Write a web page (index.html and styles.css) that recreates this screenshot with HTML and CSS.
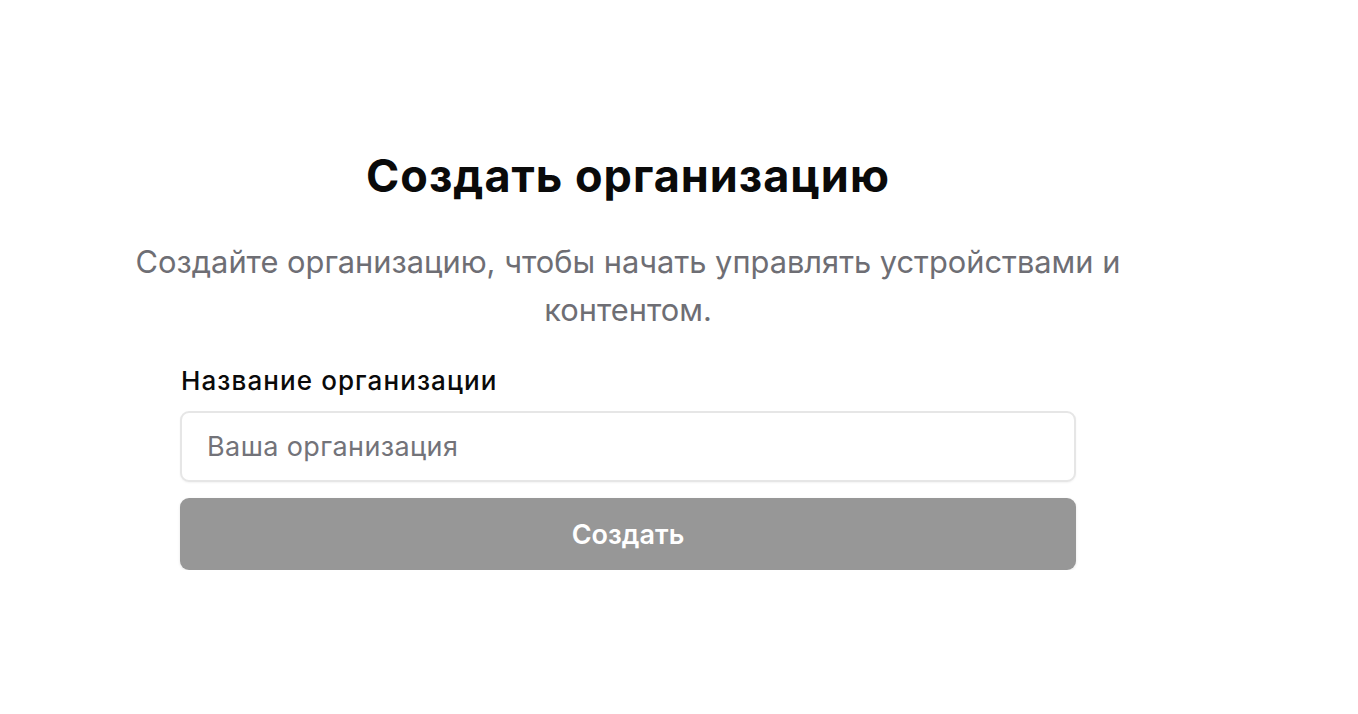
FILE: index.html
```html
<!DOCTYPE html>
<html lang="ru">
<head>
<meta charset="utf-8">
<link rel="stylesheet" href="styles.css">
</head>
<body>
<main class="page">
  <section class="panel">
    <h1 class="title">Создать организацию</h1>
    <p class="subtitle">Создайте организацию, чтобы начать управлять устройствами и контентом.</p>
    <form class="form">
      <label class="label" for="org">Название организации</label>
      <input class="input" id="org" type="text" placeholder="Ваша организация">
      <button class="button" type="button">Создать</button>
    </form>
  </section>
</main>
</body>
</html>
```
FILE: styles.css
```css
* { box-sizing: border-box; }
html, body { margin: 0; padding: 0; background: #fff; }
body {
  font-family: Inter, "Noto Sans", sans-serif;
  color: #0a0a0a;
}
.page {
  width: 1256px;
  padding-top: 149px;
  display: flex;
  justify-content: center;
}
.panel {
  width: 1010px;
  display: flex;
  flex-direction: column;
  align-items: center;
}
.title {
  margin: 0;
  font-size: 45px;
  line-height: 54px;
  font-weight: 700;
  letter-spacing: 1px;
}
.subtitle {
  margin: 35px 0 0;
  font-size: 30.8px;
  line-height: 48px;
  color: #6e6e74;
  text-align: center;
}
.form {
  width: 896px;
  margin-top: 29px;
  display: flex;
  flex-direction: column;
}
.label {
  font-size: 26px;
  line-height: 36px;
  font-weight: 500;
  letter-spacing: 1.1px;
  color: #0a0a0a;
  padding-left: 1px;
}
.input {
  margin-top: 12px;
  height: 71px;
  border: 2px solid #e6e6e6;
  border-radius: 9px;
  padding: 0 25px;
  font-family: inherit;
  font-size: 27px;
  letter-spacing: 0.4px;
  color: #0a0a0a;
  box-shadow: 0 1px 2px rgba(0,0,0,0.05);
  outline: none;
}
.input::placeholder { color: #737379; }
.button {
  margin-top: 16px;
  height: 72px;
  border: none;
  border-radius: 9px;
  background: #979797;
  color: #fff;
  font-family: inherit;
  font-size: 27px;
  font-weight: 600;
  box-shadow: 0 1px 3px rgba(0,0,0,0.1);
}
```
